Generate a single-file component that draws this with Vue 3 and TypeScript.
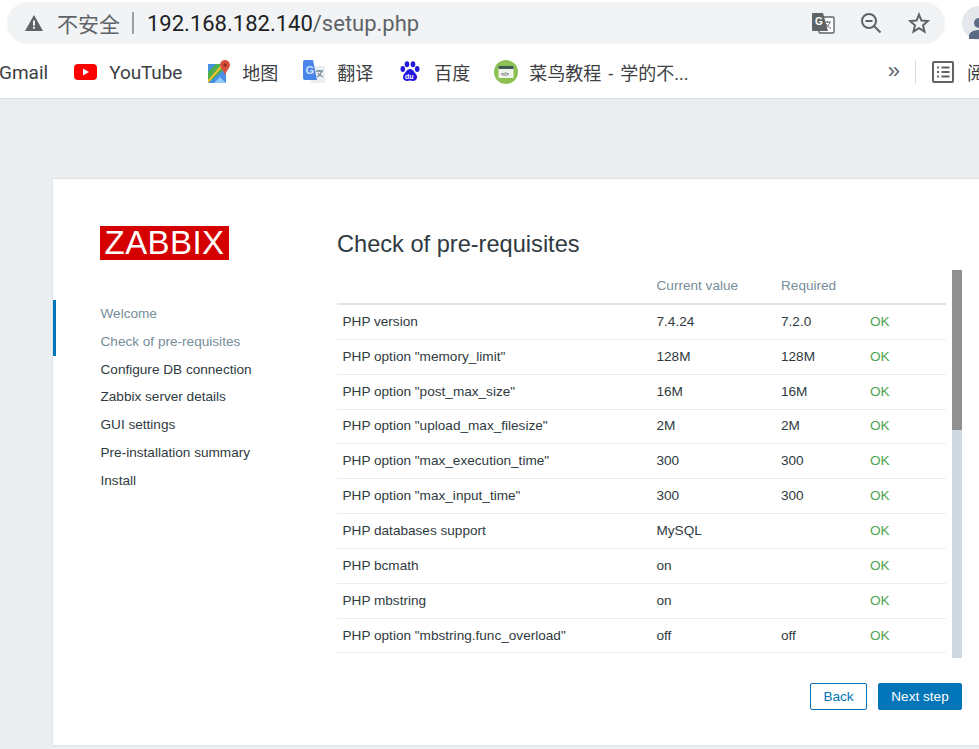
<script setup lang="ts">
interface Row { name: string; current: string; required: string }
const rows: Row[] = [
  { name: 'PHP version', current: '7.4.24', required: '7.2.0' },
  { name: 'PHP option "memory_limit"', current: '128M', required: '128M' },
  { name: 'PHP option "post_max_size"', current: '16M', required: '16M' },
  { name: 'PHP option "upload_max_filesize"', current: '2M', required: '2M' },
  { name: 'PHP option "max_execution_time"', current: '300', required: '300' },
  { name: 'PHP option "max_input_time"', current: '300', required: '300' },
  { name: 'PHP databases support', current: 'MySQL', required: '' },
  { name: 'PHP bcmath', current: 'on', required: '' },
  { name: 'PHP mbstring', current: 'on', required: '' },
  { name: 'PHP option "mbstring.func_overload"', current: 'off', required: 'off' },
]
const steps = ['Welcome', 'Check of pre-requisites', 'Configure DB connection', 'Zabbix server details', 'GUI settings', 'Pre-installation summary', 'Install']
</script>

<template>
  <div class="page">
    <header class="toolbar">
      <div class="omnibox">
        <svg class="warn" width="18" height="16" viewBox="0 0 18 16"><path d="M9 0 18 16H0Z" fill="#5f6368"/><rect x="8" y="5.500" width="2" height="5" fill="#f1f3f4"/><rect x="8" y="11.700" width="2" height="2" fill="#f1f3f4"/></svg>
        <span class="insecure">不安全</span>
        <span class="sep"></span>
        <span class="url"><b>192.168.182.140</b>/setup.php</span>
        <span class="grow"></span>
        <svg class="o-translate" width="24" height="24" viewBox="0 0 24 24"><rect x="8" y="6" width="15" height="16" rx="1" fill="#fff" stroke="#5f6368" stroke-width="1.400"/><path d="M1 3a1 1 0 0 1 1-1h10l5 18H2a1 1 0 0 1-1-1Z" fill="#5f6368"/><text x="4" y="14" class="g">G</text><path d="M13 11h7M16.500 10v1.500M19 11c-1 3-3 5-5 6M15 13c1 2 3 3.500 5 4.500" fill="none" stroke="#5f6368" stroke-width="1"/></svg>
        <svg class="o-zoom" width="22" height="22" viewBox="0 0 22 22" fill="none" stroke="#5f6368" stroke-width="2"><circle cx="9" cy="9" r="7"/><path d="M14 14l6.500 6.500M5.500 9h7"/></svg>
        <svg class="o-star" width="22" height="22" viewBox="0 0 24 24" fill="none" stroke="#5f6368" stroke-width="2.200"><path d="M12 2.800l2.700 6.500 7 .6-5.300 4.600 1.600 6.900-6-3.700-6 3.700 1.600-6.900L2.300 9.900l7-.6Z"/></svg>
      </div>
      <div class="avatar">
        <svg width="20" height="24" viewBox="0 0 20 24"><circle cx="10" cy="7" r="5" fill="#5b6b84"/><path d="M0 23v-3c0-4 5-6 10-6s10 2 10 6v3Z" fill="#5b6b84"/></svg>
      </div>
    </header>
    <nav class="bookmarks">
      <span class="bm gmail">Gmail</span>
      <span class="bm yt">
        <svg width="23" height="16" viewBox="0 0 23 16"><rect width="23" height="16" rx="4" fill="#f00"/><path d="M9 4.500v7l6-3.500Z" fill="#fff"/></svg>
        YouTube
      </span>
      <span class="bm maps cjk">
        <svg width="23" height="24" viewBox="0 0 23 24"><path d="M0 4h18v19H0Z" fill="#4caf50"/><path d="M0 23 18 8v15Z" fill="#4a90e2"/><path d="M0 4h8L0 12Z" fill="#4a90e2"/><path d="M0 20 14 4h3L0 23Z" fill="#fbc02d"/><path d="M6 23l6-6 6 6Z" fill="#90caf9"/><path d="M17 0a5 5 0 0 1 5 5c0 3-4 6-5 10-1-4-5-7-5-10a5 5 0 0 1 5-5Z" fill="#d9503f"/><circle cx="17" cy="5" r="1.700" fill="#8e2a1f"/></svg>
        地图
      </span>
      <span class="bm trans cjk">
        <svg width="24" height="24" viewBox="0 0 24 24"><rect x="9" y="6" width="14" height="17" rx="1" fill="#eceff1"/><path d="M14 11h7M17 10v2M20 11c-1 3-3 5-5 6M16 13c1 2 3 3 5 4" fill="none" stroke="#78909c" stroke-width="1.300"/><path d="M1 2a2 2 0 0 1 2-2h8l4 20H3a2 2 0 0 1-2-2Z" fill="#4a86e8"/><text x="3.500" y="14" class="g2">G</text></svg>
        翻译
      </span>
      <span class="bm baidu cjk">
        <svg width="20" height="22" viewBox="0 0 20 22"><g fill="#2319dc"><ellipse cx="2.800" cy="8" rx="2.300" ry="3"/><ellipse cx="7" cy="3.200" rx="2.300" ry="3"/><ellipse cx="13" cy="3.200" rx="2.300" ry="3"/><ellipse cx="17.200" cy="8" rx="2.300" ry="3"/><path d="M10 8c3 0 4 3 6 5 2 3 1 7-3 7-1 0-2-.5-3-.5s-2 .5-3 .5c-4 0-5-4-3-7 2-2 3-5 6-5Z"/></g><text x="5" y="18" class="du">du</text></svg>
        百度
      </span>
      <span class="bm runoob cjk">
        <svg width="24" height="24" viewBox="0 0 24 24"><circle cx="12" cy="12" r="12" fill="#8cc152"/><rect x="4.500" y="6" width="15" height="12" rx="1" fill="#f3f3ee"/><rect x="4.500" y="6" width="15" height="3" fill="#3f5a50"/><text x="7" y="15.800" class="code">&lt;/&gt;</text></svg>
        菜鸟教程 - 学的不...
      </span>
      <span class="grow"></span>
      <span class="more">»</span>
      <span class="vsep"></span>
      <svg class="list" width="22" height="22" viewBox="0 0 22 22" fill="none" stroke="#5f6368" stroke-width="2"><rect x="1" y="1" width="20" height="20" rx="1"/><path d="M5 6.500h2M9.500 6.500h8M5 11h2M9.500 11h8M5 15.500h2M9.500 15.500h8"/></svg>
      <span class="bm reader cjk">阅</span>
    </nav>
    <main class="card">
      <aside class="sidebar">
        <div class="logo">ZABBIX</div>
        <ul class="steps">
          <li v-for="(s, i) in steps" :key="s" :class="{ done: i < 2 }">{{ s }}</li>
        </ul>
      </aside>
      <section class="content">
        <h1>Check of pre-requisites</h1>
        <div class="scroll-area">
          <div class="table">
            <div class="row head">
              <span class="c1"></span><span class="c2">Current value</span><span class="c3">Required</span><span class="c4"></span>
            </div>
            <div v-for="r in rows" :key="r.name" class="row">
              <span class="c1">{{ r.name }}</span>
              <span class="c2">{{ r.current }}</span>
              <span class="c3">{{ r.required }}</span>
              <span class="c4 ok">OK</span>
            </div>
          </div>
          <div class="scrollbar"><div class="thumb"></div></div>
        </div>
        <div class="actions">
          <button class="btn back">Back</button>
          <button class="btn next">Next step</button>
        </div>
      </section>
    </main>
  </div>
</template>

<style>
html, body { margin: 0; background: #ebeef0; overflow: hidden; }
</style>

<style scoped>
.page {
  width: 979px;
  height: 749px;
  overflow: hidden;
  background: #ebeef0;
  font-family: "Liberation Sans", Arial, sans-serif;
  font-size: 13.600px;
  color: #2f3a41;
}
.grow { flex: 1; }
.toolbar {
  height: 51px;
  background: #fff;
  box-sizing: border-box;
  padding-top: 2px;
  display: flex;
  gap: 17px;
}
.omnibox {
  width: 938px;
  flex: none;
  height: 42px;
  margin-left: 7px;
  box-sizing: border-box;
  border-radius: 21px;
  background: #f1f3f4;
  display: flex;
  align-items: center;
  padding: 0 15px 0 18px;
}
.warn { flex: none; }
.insecure {
  margin-left: 14px;
  font: 21px "Noto Sans CJK SC", sans-serif;
  color: #5f6368;
  width: 64px;
  white-space: nowrap;
}
.sep { width: 2px; height: 22px; background: #9aa0a6; margin: 0 13px 0 11px; }
.url { font-size: 22px; color: #5f6368; font-family: "Roboto", "Liberation Sans", sans-serif; }
.url b { font-weight: 400; color: #202124; }
.g { font: bold 10px "Liberation Sans", sans-serif; fill: #fff; }
.g2 { font: bold 11px "Liberation Sans", sans-serif; fill: #cfe0fb; }
.du { font: bold 7px "Liberation Sans", sans-serif; fill: #fff; }
.code { font: bold 5.500px "Liberation Sans", sans-serif; fill: #3f5a50; }
.o-zoom { margin-left: 25px; }
.o-star { margin-left: 26px; }
.avatar {
  width: 34px;
  height: 34px;
  border-radius: 50%;
  background: #e4e7ec;
  display: flex;
  align-items: flex-end;
  justify-content: center;
  flex: none;
  margin-top: 4px;
}
.bookmarks {
  height: 49px;
  box-sizing: border-box;
  background: #fff;
  border-bottom: 1px solid #dadce0;
  display: flex;
  align-items: center;
  white-space: nowrap;
  padding-bottom: 4px;
  font-size: 19px;
  color: #3c4043;
  margin-top: -1px;
}
.bm { display: inline-flex; align-items: center; font-family: "Roboto", "Noto Sans CJK SC", sans-serif; }
.cjk { font-size: 18px; }
.gmail { margin-right: 26px; margin-left: -1px; }
.yt { gap: 12px; margin-right: 26px; letter-spacing: -0.1px; }
.maps { gap: 11px; margin-right: 24px; }
.trans { gap: 11px; margin-right: 27px; }
.baidu { gap: 14px; margin-right: 24px; }
.runoob { gap: 11px; word-spacing: 2.500px; }
.more { color: #5f6368; font-size: 22px; margin-right: 15px; line-height: 1; margin-top: -3px; }
.vsep { width: 1px; height: 24px; background: #dadce0; margin-right: 16px; }
.list { flex: none; margin-right: 13px; }
.reader { flex: none; width: 12px; overflow: hidden; }
.card {
  margin: 79px 0 0 52px;
  width: 1000px;
  height: 568px;
  box-sizing: border-box;
  background: #fff;
  border: 1px solid #dfe4e7;
  display: flex;
}
.sidebar { width: 284px; flex: none; box-sizing: border-box; padding-top: 47px; }
.logo {
  margin-left: 47px;
  width: 129px;
  height: 34px;
  background: #d40000;
  color: #fff;
  font: 33px/34px "Liberation Sans", sans-serif;
  letter-spacing: 0.400px;
  text-align: center;
}
.steps { list-style: none; margin: 40px 0 0; padding: 0; }
.steps li {
  height: 27.830px;
  line-height: 27.830px;
  padding-left: 47.500px;
}
.steps li.done { color: #768d99; box-shadow: inset 3px 0 0 #0275b8; }
.content { flex: none; width: 625px; display: flex; flex-direction: column; }
h1 {
  margin: 49px 0 0;
  font-size: 23.600px;
  line-height: 32px;
  font-weight: 400;
}
.scroll-area { display: flex; margin-top: 10px; height: 388px; overflow: hidden; }
.table { width: 609px; flex: none; }
.row {
  display: flex;
  height: 34.850px;
  box-sizing: border-box;
  align-items: center;
  border-bottom: 1px solid #ebeef0;
  padding-bottom: 1px;
}
.row.head { height: 35px; border-bottom: 2px solid #dfe4e7; color: #768d99; padding-bottom: 3px; }
.c1 { width: 319.500px; padding-left: 5.500px; box-sizing: border-box; }
.c2 { width: 124.500px; }
.c3 { width: 89px; }
.c4 { width: 60px; }
.ok { color: #4fa352; }
.scrollbar { width: 10px; margin-left: 6px; background: #d1d9e0; flex: none; }
.thumb { height: 160px; background: #909090; }
.actions { display: flex; justify-content: flex-end; gap: 11px; margin-top: 25px; }
.btn {
  height: 27px;
  box-sizing: border-box;
  border-radius: 2px;
  font: 13.600px "Liberation Sans", sans-serif;
  padding: 0;
}
.back { width: 57px; background: #fff; border: 1px solid #0275b8; color: #0275b8; }
.next { width: 84px; background: #0275b8; border: 1px solid #0275b8; color: #fff; }
</style>
